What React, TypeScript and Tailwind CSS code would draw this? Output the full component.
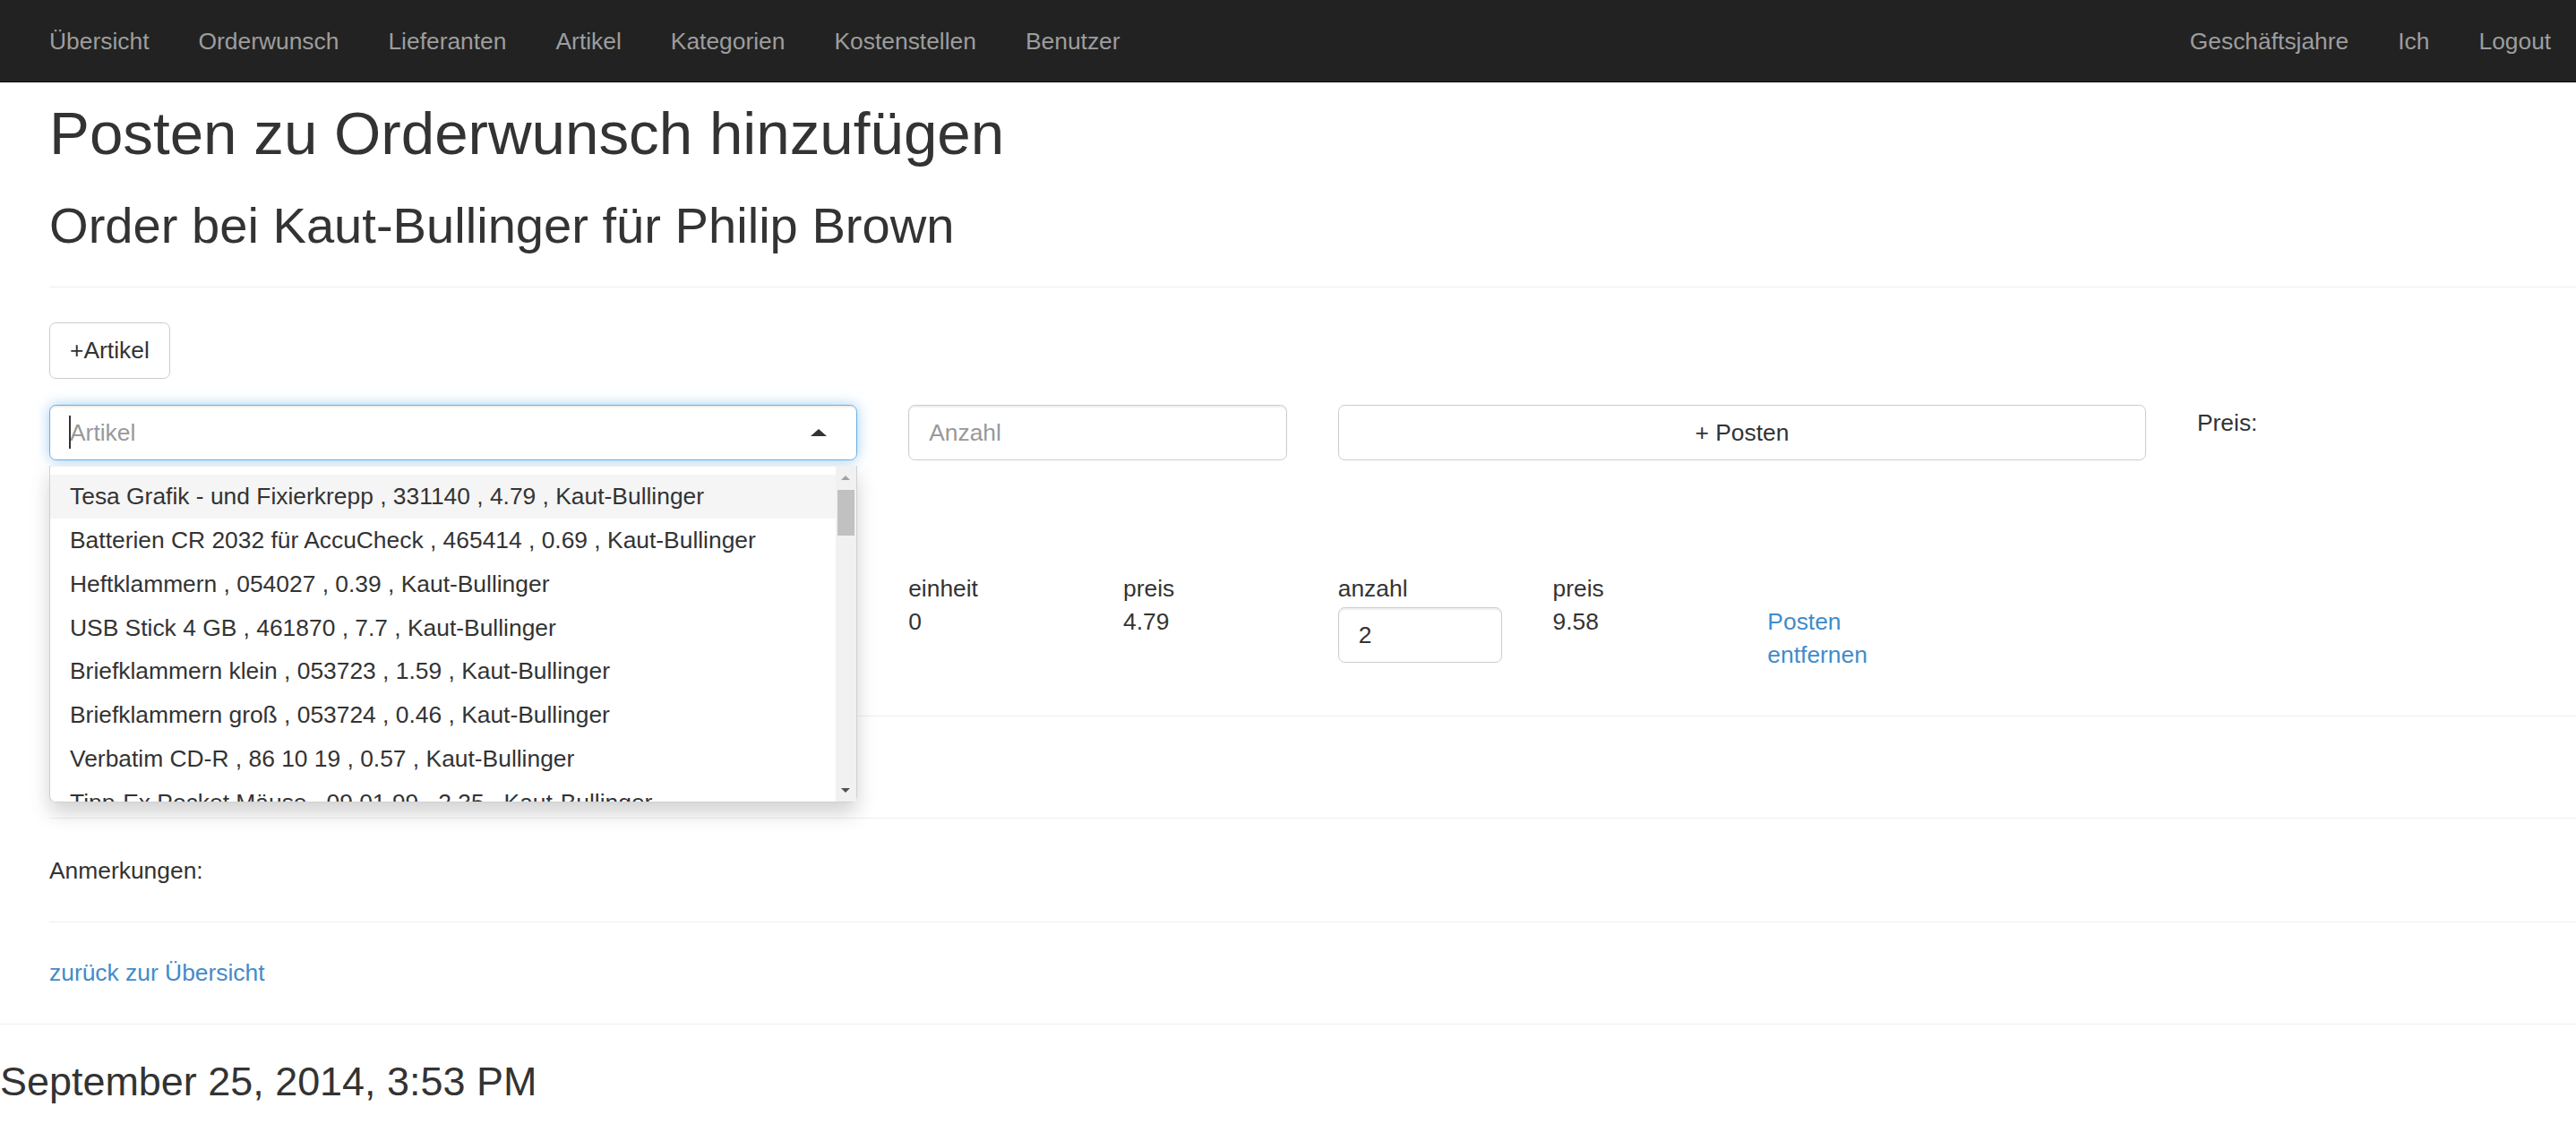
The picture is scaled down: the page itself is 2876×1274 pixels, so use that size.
const leftLinks = ["Übersicht", "Orderwunsch", "Lieferanten", "Artikel", "Kategorien", "Kostenstellen", "Benutzer"];
const rightLinks = ["Geschäftsjahre", "Ich", "Logout"];

const options = [
  "Tesa Grafik - und Fixierkrepp , 331140 , 4.79 , Kaut-Bullinger",
  "Batterien CR 2032 für AccuCheck , 465414 , 0.69 , Kaut-Bullinger",
  "Heftklammern , 054027 , 0.39 , Kaut-Bullinger",
  "USB Stick 4 GB , 461870 , 7.7 , Kaut-Bullinger",
  "Briefklammern klein , 053723 , 1.59 , Kaut-Bullinger",
  "Briefklammern groß , 053724 , 0.46 , Kaut-Bullinger",
  "Verbatim CD-R , 86 10 19 , 0.57 , Kaut-Bullinger",
  "Tipp-Ex Pocket Mäuse , 09 01 99 , 2.35 , Kaut-Bullinger",
];

function Navbar() {
  return (
    <nav className="flex h-[50px] items-start justify-between border-b border-[#080808] bg-[#222] px-[15px]">
      <ul className="flex">
        {leftLinks.map((l) => (
          <li key={l} className="px-[15px] py-[15px] text-[#9d9d9d]">{l}</li>
        ))}
      </ul>
      <ul className="-mr-[15px] flex">
        {rightLinks.map((l) => (
          <li key={l} className="px-[15px] py-[15px] text-[#9d9d9d]">{l}</li>
        ))}
      </ul>
    </nav>
  );
}

function ArtikelSelect() {
  return (
    <div className="relative col-span-4">
      <div className="relative flex h-[34px] items-center rounded-[4px] border border-[#66afe9] px-[12px] shadow-[inset_0_1px_1px_rgba(0,0,0,0.075),0_0_8px_rgba(102,175,233,0.6)]">
        <span className="absolute left-[11.5px] top-[6px] h-[20px] w-px bg-[#333]" />
        <span className="text-[#999]">Artikel</span>
        <span className="ml-auto mr-[6px] h-0 w-0 border-x-[5px] border-b-[4.5px] border-x-transparent border-b-[#333]" />
      </div>

      {/* offene Auswahlliste */}
      <div className="absolute left-0 top-[37px] z-10 flex h-[205px] w-full rounded-b-[4px] border border-[#d0d0d0] border-t-[#f0f0f0] bg-white shadow-[0_6px_12px_rgba(0,0,0,0.175)]">
        <div className="flex-1 overflow-hidden pt-[5px]">
          {options.map((o, i) => (
            <div
              key={o}
              className={
                "flex h-[26.6px] items-center whitespace-nowrap px-[12px] text-[#333] " +
                (i === 0 ? "bg-[#f5f5f5]" : "")
              }
            >
              {o}
            </div>
          ))}
        </div>
        <div className="flex w-[13px] flex-col bg-[#f1f1f1]">
          <div className="flex h-[14px] items-center justify-center">
            <span className="h-0 w-0 border-x-[3px] border-b-[3px] border-x-transparent border-b-[#a3a3a3]" />
          </div>
          <div className="mx-[1.5px] h-[28px] bg-[#c1c1c1]" />
          <div className="flex-1" />
          <div className="flex h-[14px] items-center justify-center">
            <span className="h-0 w-0 border-x-[3px] border-t-[3px] border-x-transparent border-t-[#505050]" />
          </div>
        </div>
      </div>
    </div>
  );
}

export default function App() {
  return (
    <div className="min-h-[695px] w-[1568px] overflow-hidden bg-white font-['Liberation_Sans',Arial,sans-serif] text-[14.4px] leading-[20px] text-[#333] [zoom:1.834]">
      <Navbar />

      <div className="pl-[30px]">
        <h1 className="mt-[11px] text-[36.7px] leading-[40px]">Posten zu Orderwunsch hinzufügen</h1>
        <h2 className="mt-[20px] text-[30.6px] leading-[33px]">Order bei Kaut-Bullinger für Philip Brown</h2>
        <hr className="mt-[20.5px] border-t border-[#eee]" />

        <button className="mt-[21.5px] h-[34px] rounded-[4px] border border-[#ccc] bg-white px-[12px] text-[#333]">
          +Artikel
        </button>

        <div className="mt-[16px] grid grid-cols-12 gap-x-[31px]">
          <ArtikelSelect />
          <div className="col-span-2 flex h-[34px] items-center rounded-[4px] border border-[#ccc] px-[12px] text-[#999] shadow-[inset_0_1px_1px_rgba(0,0,0,0.075)]">
            Anzahl
          </div>
          <button className="col-span-4 h-[34px] rounded-[4px] border border-[#ccc] bg-white text-[#333]">
            + Posten
          </button>
          <div className="col-span-2 pt-px">Preis:</div>
        </div>

        <div className="mt-[68px] grid grid-cols-12 gap-x-[31px]">
          <div className="col-span-4" />
          <div>
            <div>einheit</div>
            <div>0</div>
          </div>
          <div>
            <div>preis</div>
            <div>4.79</div>
          </div>
          <div>
            <div>anzahl</div>
            <div className="mt-px flex h-[34px] items-center rounded-[4px] border border-[#ccc] px-[12px] shadow-[inset_0_1px_1px_rgba(0,0,0,0.075)]">
              2
            </div>
          </div>
          <div>
            <div>preis</div>
            <div>9.58</div>
          </div>
          <div className="pt-[20px] text-[#428bca]">
            Posten
            <br />
            entfernen
          </div>
        </div>

        <hr className="mt-[27px] border-t border-[#eee]" />
        <hr className="mt-[61.5px] border-t border-[#eee]" />
        <p className="mt-[22px]">Anmerkungen:</p>
        <hr className="mt-[21px] border-t border-[#eee]" />
        <p className="mt-[20.5px] text-[#428bca]">zurück zur Übersicht</p>
      </div>

      <hr className="mt-[21px] border-t border-[#eee]" />
      <h3 className="mt-[22px] text-[24.5px] leading-[26.4px]">September 25, 2014, 3:53 PM</h3>
    </div>
  );
}
